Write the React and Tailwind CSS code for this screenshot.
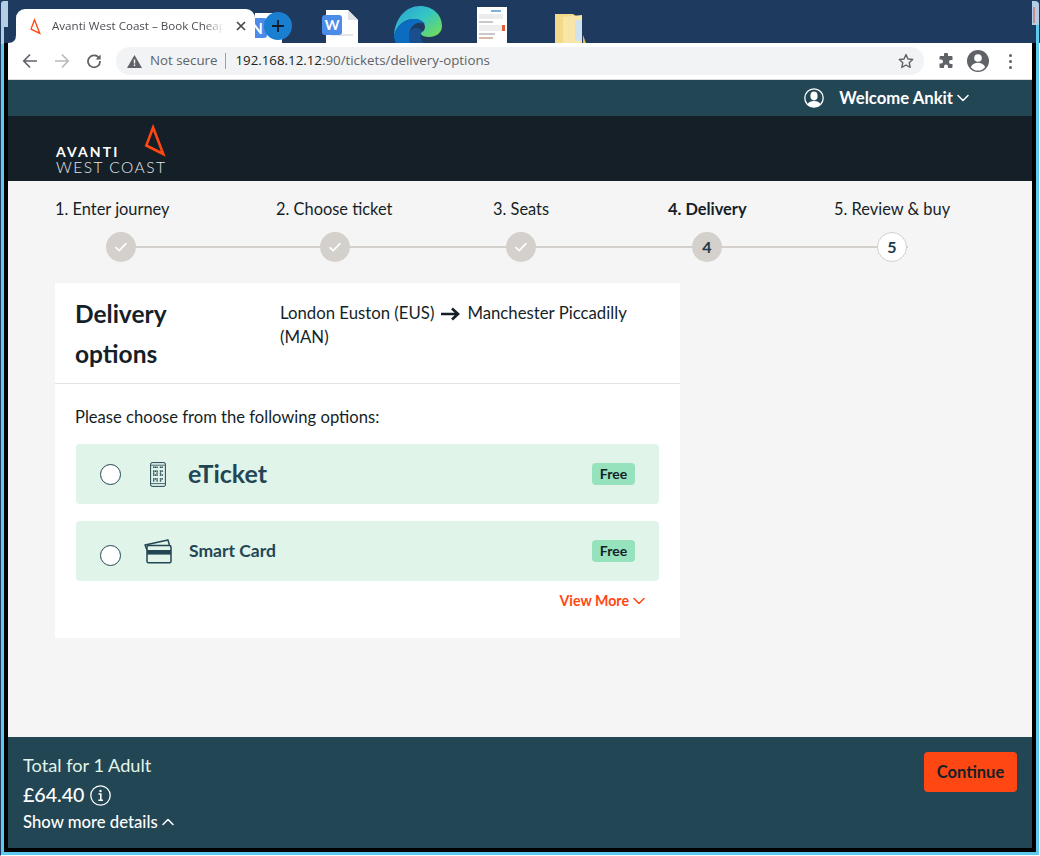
import React from "react";

const F = { fontFamily: '"Lato", sans-serif' };

function Check() {
  return (
    <svg width="14" height="14" viewBox="0 0 14 14" fill="none" stroke="#fff" strokeWidth="1.6" strokeLinecap="round" strokeLinejoin="round">
      <path d="M2 7.6l3.2 3L12 3.6" />
    </svg>
  );
}

function Chevron({ up, color = "#fff", w = 12 }) {
  return (
    <svg width={w} height="8" viewBox="0 0 12 8" fill="none" stroke={color} strokeWidth="1.5" strokeLinecap="round" strokeLinejoin="round">
      <path d={up ? "M1 6.5L6 1.5l5 5" : "M1 1.5l5 5 5-5"} />
    </svg>
  );
}

function AvantiMark({ w, h }) {
  return (
    <svg width={w} height={h} viewBox="0 0 21 33" fill="none" stroke="#ff4713" strokeWidth="2.6" strokeLinejoin="miter">
      <path d="M8.6 3.5L1.8 21.5 18.8 30Z" />
    </svg>
  );
}

function Option({ icon, label, big, mt }) {
  return (
    <div className={`h-[60px] rounded-[4px] bg-[#e0f4e9] flex items-center pl-[24px] pr-[24px] ${mt}`}>
      <div className={`w-[21px] h-[21px] rounded-full bg-white border border-[#234655] shrink-0 ${big ? "" : "mt-[9px]"}`} />
      <div className="w-[36px] ml-[19px] flex justify-center shrink-0">{icon}</div>
      <div className={`text-[#234655] font-bold ${big ? "ml-[12px] text-[25px]" : "ml-[13px] text-[17.500px]"}`}>{label}</div>
      <div className="ml-auto w-[43px] h-[22px] pb-[2px] rounded-[4px] bg-[#95e2bd] text-[#151f28] text-[14px] font-bold flex items-center justify-center">Free</div>
    </div>
  );
}

function QrPhone() {
  const cells = [];
  for (let y = 0; y < 8; y++)
    for (let x = 0; x < 6; x++)
      if ((x * 3 + y * 5 + x * y) % 4 !== 1) cells.push(<rect key={x + "-" + y} x={3 + x * 1.7} y={4.5 + y * 1.95} width="1.4" height="1.5" fill="#234655" />);
  return (
    <svg width="16" height="25" viewBox="0 0 16 25" fill="none" stroke="#234655">
      <rect x="0.6" y="0.6" width="14.8" height="23.8" rx="1.5" strokeWidth="1" />
      <path d="M1 3.2h14M1 21.6h14" strokeWidth="0.8" />
      <g stroke="none">{cells}</g>
    </svg>
  );
}

function CardIcon() {
  return (
    <svg width="28" height="25" viewBox="0 0 28 25" fill="none" stroke="#234655" strokeWidth="1.5" strokeLinejoin="round">
      <path d="M3 11L1 6 24 1l1.400 5" />
      <rect x="3" y="6.400" width="24" height="17.400" rx="1.600" fill="#e0f4e9" />
      <rect x="3" y="11" width="24" height="4.600" fill="#234655" stroke="none" />
    </svg>
  );
}

export default function App() {
  return (
    <div className="relative w-[1040px] h-[856px] bg-[#1f3a5f] flex flex-col overflow-hidden" style={F}>
      {/* Window frame corners, over the desktop */}
      <div className="absolute left-[1px] top-[1px] w-[3px] h-[43px] bg-[#b3cde6] rounded-tl-[3px]" />
      <div className="absolute left-[4px] top-[1px] w-[4px] h-[26px] bg-[#b3cde6]" />
      <div className="absolute left-[1032px] top-[1px] w-[7px] h-[24px] bg-[#b3cde6] rounded-tr-[4px]">
        <div className="ml-[1px] mt-[6px] w-[2px] h-[16px] bg-[#c98a90]" />
      </div>
      <div className="absolute left-[1036px] top-[25px] w-[3px] h-[19px] bg-[#5fc9ee]" />

      {/* Desktop strip + tab */}
      <div className="h-[43px] flex items-end shrink-0 relative">
        <div className="ml-[16px] w-[239px] h-[34px] bg-white rounded-t-[9px] flex items-center pl-[14px] relative z-10" style={{ fontFamily: '"Open Sans", sans-serif' }}>
          <svg className="absolute -left-[8px] bottom-0" width="8" height="8" viewBox="0 0 8 8"><path d="M0 8Q8 8 8 0V8Z" fill="#fff" /></svg>
          <AvantiMark w={11} h={17} />
          <div className="ml-[11px] w-[172px] overflow-hidden whitespace-nowrap text-[11.600px] text-[#4a4d51] [mask-image:linear-gradient(to_right,black_88%,transparent)]">Avanti West Coast – Book Cheap</div>
          <svg className="ml-[12px]" width="10" height="10" viewBox="0 0 10 10" stroke="#45484c" strokeWidth="1.7"><path d="M1 1l8 8M9 1L1 9" /></svg>
        </div>
        {/* desktop file icons */}
        <div className="w-[27px] h-[30px] bg-white overflow-hidden">
          <div className="w-[20px] h-[20px] bg-[#4d8be8] text-white text-[15px] font-bold leading-[20px] text-center -ml-[8px] mt-[5px] rounded-[3px]">N</div>
        </div>
        <div className="ml-[44px] w-[32px] h-[33px] relative">
          <svg className="absolute left-0 top-0" width="32" height="33" viewBox="0 0 32 33"><path d="M0 0h22l10 10v23H0z" fill="#fff" /><path d="M22 0v10h10z" fill="#dfe3e8" /><path d="M5 25h22" stroke="#c9ccd0" /></svg>
          <div className="absolute -left-[4px] top-[5px] w-[20px] h-[20px] bg-[#4d8be8] rounded-[3px] text-white text-[14px] font-bold leading-[20px] text-center">W</div>
        </div>
        <svg className="ml-[36px]" width="48" height="37" viewBox="0 0 48 37">
          <defs>
            <linearGradient id="e1" x1="0" y1="0" x2="1" y2="0.8">
              <stop offset="0" stopColor="#2a9fd8" />
              <stop offset="0.55" stopColor="#34c6c4" />
              <stop offset="1" stopColor="#6fdc5c" />
            </linearGradient>
          </defs>
          <path d="M0 30C1 12 12 0 26 0c13 0 22 9 22 20 0 7-6 11-13 11-4 0-7-1-9-4 3-1 5-3 5-6 0-5-5-8-11-8C10 13 2 20 0 30z" fill="url(#e1)" />
          <path d="M0 30c2-10 10-17 20-17 5 0 9 2 11 5-6-3-13 0-15 7-1 4 0 9 3 12H2c-1-2-2-4-2-7z" fill="#0c6cbf" />
          <path d="M16 37c-2-5-1-13 4-15 3-1 6 0 8 3-2 4-2 9 2 12z" fill="#1a4f8f" />
        </svg>
        <div className="ml-[35px] w-[30px] h-[36px] bg-white px-[2px] pt-[3px] flex flex-col gap-[2px]">
          <div className="h-[2px] w-[10px] ml-[12px] bg-[#7fb0e0]" />
          <div className="h-[5px] w-[24px] bg-[#ececec]" />
          <div className="h-[2px] w-[14px] bg-[#c9c9c9]" />
          <div className="h-[6px] w-[26px] bg-[#eee] flex justify-end"><div className="w-[3px] bg-[#e0603a]" /></div>
          <div className="h-[2px] w-[16px] bg-[#c9c9c9]" />
          <div className="h-[2px] w-[14px] bg-[#d8b9a8]" />
        </div>
        <svg className="ml-[48px]" width="32" height="31" viewBox="0 0 32 31">
          <path d="M0 2h18l3 2h6v27H0z" fill="#f3d98a" />
          <path d="M8 5l19-2v28H8z" fill="#f8e6a6" />
          <path d="M20 8h7v21h-7z" fill="#cfe3ee" />
          <path d="M28 31v-8l3 8z" fill="#e2bd5c" />
        </svg>
        {/* plus button overlaps the tab strip */}
        <div className="absolute left-[264px] top-[12px] w-[28px] h-[28px] rounded-full bg-[#1a7fd0] flex items-center justify-center z-20">
          <svg width="14" height="14" viewBox="0 0 14 14" stroke="#111d2b" strokeWidth="1.8"><path d="M7 1v12M1 7h12" /></svg>
        </div>
      </div>

      {/* Window */}
      <div className="flex-1 flex min-h-0 bg-[#5fc9ee] border-l border-l-[#1f3a5f] border-r border-r-white border-b border-b-white pl-[3px] pr-[3px] pb-[3px]">
        <div className="flex-1 flex flex-col min-h-0 bg-black pl-[4px] pr-[4px] pb-[4px]">
          {/* Chrome toolbar */}
          <div className="h-[37px] bg-white border-b border-[#dadce0] flex items-center shrink-0 pl-[14px] pr-[14px]" style={{ fontFamily: '"Open Sans", sans-serif' }}>
            <svg width="16" height="16" viewBox="0 0 16 16" fill="none" stroke="#5f6368" strokeWidth="1.7"><path d="M15 8H2M8 1.5L1.8 8 8 14.5" /></svg>
            <svg className="ml-[16px]" width="16" height="16" viewBox="0 0 16 16" fill="none" stroke="#b9bbbe" strokeWidth="1.7"><path d="M1 8h13M8 1.5L14.2 8 8 14.5" /></svg>
            <svg className="ml-[16px]" width="16" height="16" viewBox="0 0 16 16" fill="none" stroke="#5f6368" strokeWidth="1.8"><path d="M13.3 5.5A6 6 0 1 0 14 8" /><path d="M14.6 1.5v5h-5z" fill="#5f6368" stroke="none" /></svg>
            <div className="ml-[14px] w-[808px] h-[28px] rounded-full bg-[#f1f3f4] flex items-center pl-[11px] pr-[10px] shrink-0">
              <svg width="15" height="13" viewBox="0 0 15 13"><path d="M7.5 0L15 13H0z" fill="#5f6368" /><path d="M6.8 4.5h1.4v4H6.8zM6.8 9.5h1.4V11H6.8z" fill="#fff" /></svg>
              <span className="ml-[8px] text-[13.300px] text-[#5f6368] whitespace-nowrap">Not secure</span>
              <div className="ml-[8px] w-px h-[16px] bg-[#9aa0a6]" />
              <span className="ml-[9px] text-[13.300px] whitespace-nowrap"><span className="text-[#202124]">192.168.12.12</span><span className="text-[#5f6368]">:90/tickets/delivery-options</span></span>
              <svg className="ml-auto" width="16" height="16" viewBox="0 0 16 16" fill="none" stroke="#5f6368" strokeWidth="1.4" strokeLinejoin="round"><path d="M8 1.6l2 4.4 4.7.5-3.5 3.2 1 4.7L8 12l-4.2 2.4 1-4.7L1.300 6.500 6 6z" /></svg>
            </div>
            <svg className="ml-[14px] shrink-0" width="16" height="16" viewBox="0 0 16 16" fill="#5f6368"><path d="M6 1.500a2 2 0 0 1 4 0V3h3.500a1 1 0 0 1 1 1v3H13a2 2 0 0 0 0 4h1.500v3a1 1 0 0 1-1 1H10v-1.500a2 2 0 0 0-4 0V15H2.500a1 1 0 0 1-1-1v-3.500H3a2 2 0 0 0 0-4H1.500V4a1 1 0 0 1 1-1H6z" /></svg>
            <svg className="ml-[12px] shrink-0" width="24" height="24" viewBox="0 0 24 24"><circle cx="12" cy="12" r="11" fill="#5f6368" /><circle cx="12" cy="9" r="3.800" fill="#fff" /><path d="M4.800 18c1.500-3 4.500-4.300 7.200-4.300s5.700 1.300 7.200 4.300a9 9 0 0 1-14.400 0z" fill="#fff" /></svg>
            <div className="ml-[19px] flex flex-col gap-[3px]">
              <div className="w-[3px] h-[3px] rounded-full bg-[#5f6368]" />
              <div className="w-[3px] h-[3px] rounded-full bg-[#5f6368]" />
              <div className="w-[3px] h-[3px] rounded-full bg-[#5f6368]" />
            </div>
          </div>

          {/* Teal account bar */}
          <div className="h-[36px] bg-[#234655] flex items-center justify-end pr-[63px] shrink-0">
            <svg width="20" height="20" viewBox="0 0 20 20">
              <circle cx="10" cy="10" r="9.200" fill="none" stroke="#fff" strokeWidth="1.300" />
              <ellipse cx="10" cy="8" rx="3.600" ry="4.400" fill="#fff" />
              <path d="M3.500 16.500c1-2.800 3.500-3.600 6.500-3.600s5.500.8 6.500 3.600A9 9 0 0 1 10 19a9 9 0 0 1-6.500-2.500z" fill="#fff" />
            </svg>
            <span className="ml-[15px] pt-[2px] text-white font-bold text-[16.700px]">Welcome Ankit</span>
            <span className="ml-[4px] flex"><Chevron /></span>
          </div>

          {/* Logo bar */}
          <div className="h-[65px] bg-[#151f28] shrink-0 pl-[48px] flex items-start">
            <div className="relative w-[112px] h-[65px]">
              <div className="absolute left-0 top-[29px] text-white text-[14px] font-bold leading-[14px] tracking-[2.100px]">AVANTI</div>
              <div className="absolute left-0 top-[44px] text-[#e6e8ea] text-[15.500px] font-light leading-[15px] tracking-[1.500px] whitespace-nowrap">WEST COAST</div>
              <div className="absolute left-[88px] top-[8px]"><AvantiMark w={22} h={33} /></div>
            </div>
          </div>

          {/* Content */}
          <div className="flex-1 min-h-0 bg-[#f5f5f5] pt-[17px] pl-[47px]">
            {/* stepper */}
            <div className="relative w-[900px] h-[85px]">
              <div className="absolute left-[66px] top-[48px] w-[787px] h-[2px] bg-[#d4d0cb]" />
              {[
                { x: 0, c: 66, label: "1. Enter journey" },
                { x: 221, c: 280, label: "2. Choose ticket" },
                { x: 438, c: 466, label: "3. Seats" },
                { x: 613, c: 652, label: "4. Delivery", bold: true, n: "4" },
                { x: 779, c: 837, label: "5. Review & buy", n: "5", open: true },
              ].map((s) => (
                <React.Fragment key={s.label}>
                  <div className={`absolute top-0 whitespace-nowrap text-[16.400px] leading-[21px] text-[#151f28] ${s.bold ? "font-bold" : ""}`} style={{ left: s.x }}>{s.label}</div>
                  <div
                    className={`absolute top-[34px] w-[30px] h-[30px] rounded-full flex items-center justify-center text-[16px] font-bold text-[#1c3a4a] ${s.open ? "bg-white border border-[#d4d0cb]" : "bg-[#d4d0cb]"}`}
                    style={{ left: s.c - 15 }}
                  >
                    {s.n || <Check />}
                  </div>
                </React.Fragment>
              ))}
            </div>

            {/* Card */}
            <div className="w-[625px] h-[355px] bg-white">
              <div className="h-[101px] border-b border-[#e3e3e3] flex pl-[20px]">
                <div className="w-[205px] pt-[11px] text-[24.500px] leading-[40px] font-bold text-[#151f28]">Delivery<br />options</div>
                <div className="w-[380px] pt-[18px] text-[16.750px] leading-[24px] text-[#151f28]">
                  London Euston (EUS)
                  <svg className="inline mx-[7px] align-[-2px]" width="19" height="14" viewBox="0 0 19 14" fill="none" stroke="#151f28" strokeWidth="2.600"><path d="M0 7h17M11 1.500L17 7l-6 5.500" /></svg>
                  Manchester Piccadilly (MAN)
                </div>
              </div>
              <div className="pl-[21px] pr-[21px]">
                <div className="pt-[21px] -ml-px text-[16.600px] leading-[24px] text-[#151f28]">Please choose from the following options:</div>
                <Option big label="eTicket" icon={<QrPhone />} mt="mt-[15px]" />
                <Option label="Smart Card" icon={<CardIcon />} mt="mt-[17px]" />
                <div className="mt-[9px] pr-[14px] flex justify-end items-center text-[14.200px] font-bold text-[#ff4713]">
                  View More
                  <span className="ml-[4px] flex"><Chevron color="#ff4713" /></span>
                </div>
              </div>
            </div>
          </div>

          {/* Footer */}
          <div className="h-[111px] bg-[#234655] shrink-0 flex justify-between pl-[15px] pr-[15px] pt-[15px]">
            <div className="text-white">
              <div className="text-[18.200px] leading-[26px] text-[#e0f4e9]">Total for 1 Adult</div>
              <div className="mt-[2px] flex items-center text-[19.600px] leading-[30px] font-medium">
                £64.40
                <svg className="ml-[6px]" width="21" height="21" viewBox="0 0 21 21" fill="none" stroke="#fff">
                  <circle cx="10.500" cy="10.500" r="9.700" strokeWidth="1.300" />
                  <path d="M8.500 9h2.300v6M8.300 15.300h4.600" strokeWidth="1.600" />
                  <circle cx="10.500" cy="6" r="1.200" fill="#fff" stroke="none" />
                </svg>
              </div>
              <div className="flex items-center text-[16.700px] leading-[24px] font-medium">
                Show more details
                <span className="ml-[4px] flex"><Chevron up /></span>
              </div>
            </div>
            <div className="w-[93px] h-[40px] pt-[1px] rounded-[4px] bg-[#ff4713] text-[#151f28] text-[16.500px] font-bold flex items-center justify-center">Continue</div>
          </div>
        </div>
      </div>
    </div>
  );
}
